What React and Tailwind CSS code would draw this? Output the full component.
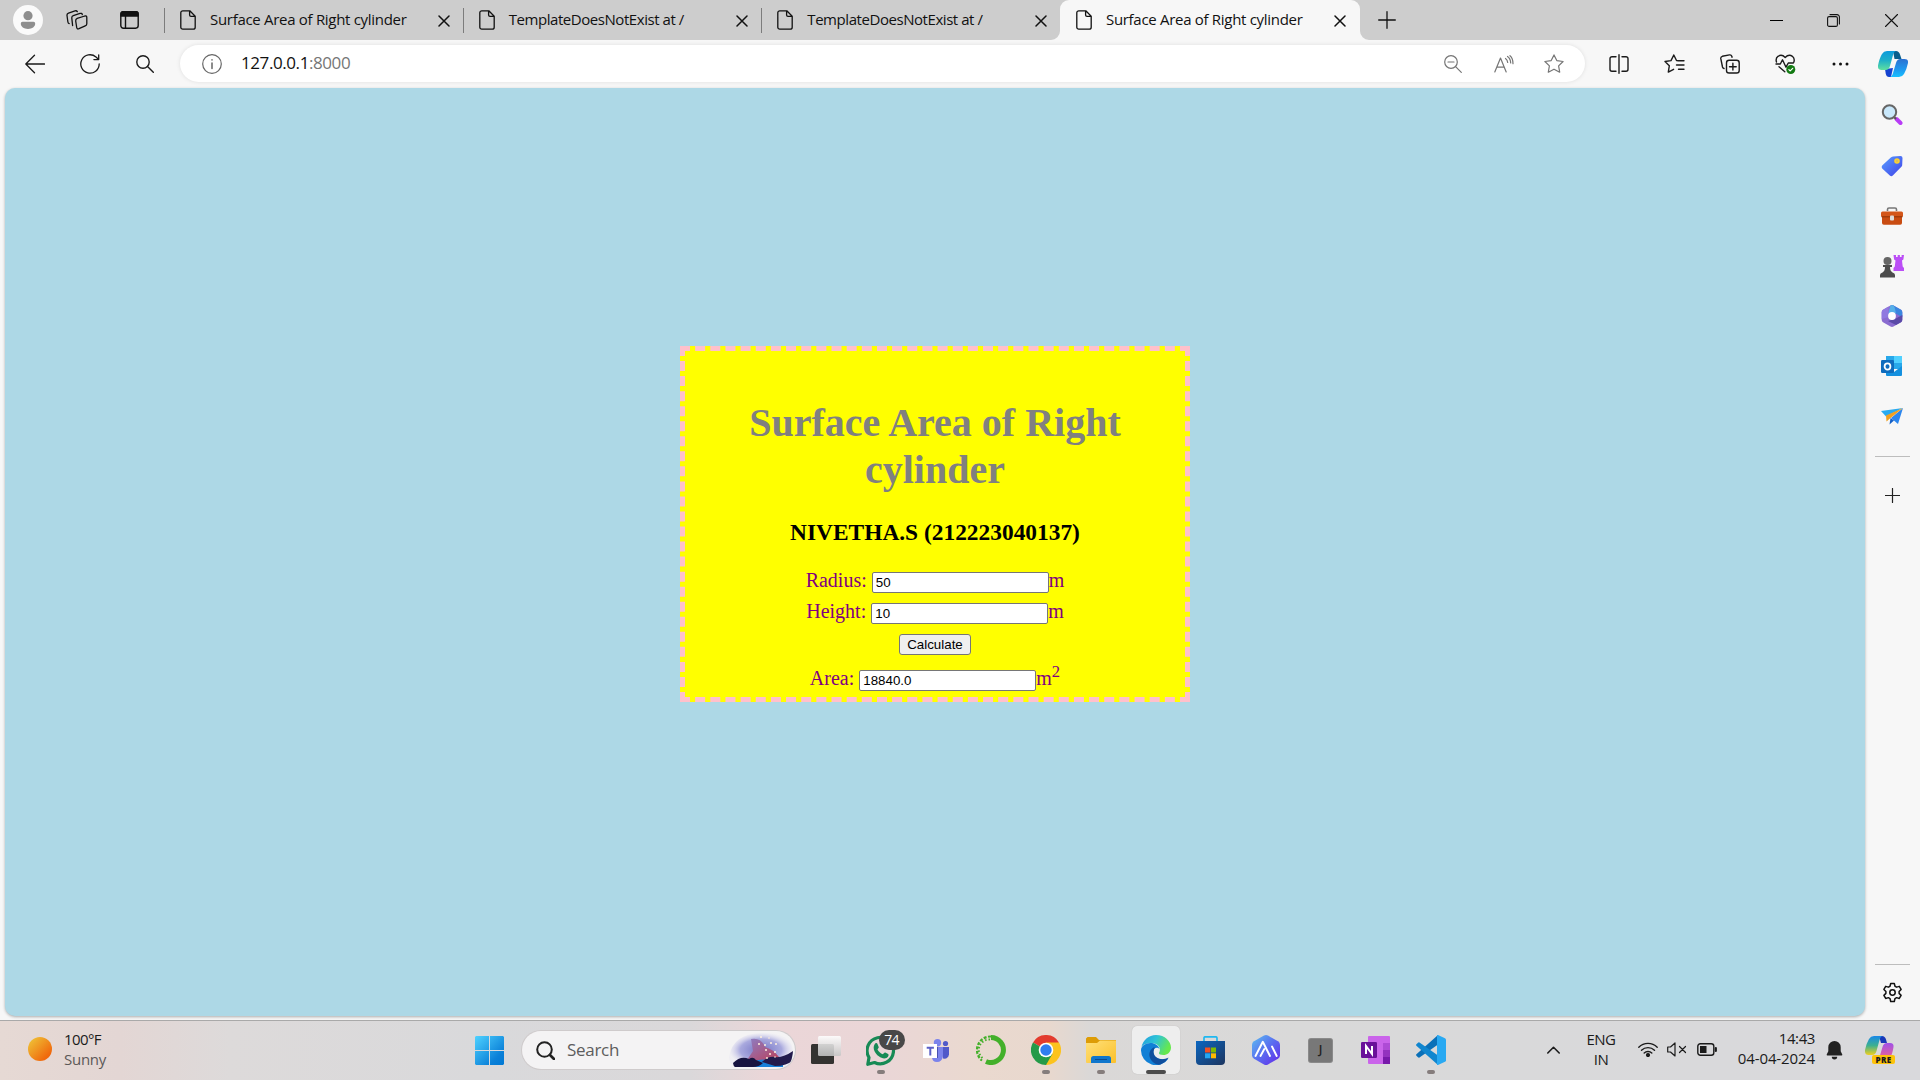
import React from 'react';

const line = { fill: 'none', stroke: 'currentColor', strokeLinecap: 'round', strokeLinejoin: 'round' };

function Svg({ w, h = w, vb, className = '', children, ...rest }) {
  return (
    <svg width={w} height={h} viewBox={vb || `0 0 ${w} ${h}`} className={'block shrink-0 ' + className} {...rest}>
      {children}
    </svg>
  );
}

/* ---------- Tab strip ---------- */

const PageIcon = () => (
  <Svg w={16} h={20} {...line} strokeWidth="1.3">
    <path d="M2.8.8h7l5.400 5.400v11a2 2 0 0 1-2 2H2.800a2 2 0 0 1-2-2V2.800a2 2 0 0 1 2-2zM9.600 1v4a1.400 1.400 0 0 0 1.400 1.400h4" />
  </Svg>
);

const TabClose = () => (
  <Svg w={12} {...line} strokeWidth="1.500">
    <path d="M1 1l10 10M11 1L1 11" />
  </Svg>
);

function Tab({ title, active, narrow }) {
  return (
    <div className={'relative flex h-10 shrink-0 items-center pl-[16px] ' + (active ? 'w-[300px] rounded-t-[9px] bg-[#f7f7f7]' : 'w-[298.66px]')}>
      {!active && <span className="absolute left-0 top-2 h-[25px] w-px bg-[#7c7c7c]" />}
      {active && (
        <>
          <Svg w={9} className="absolute bottom-0 -left-[9px]"><path d="M9 0v9H0A9 9 0 0 0 9 0z" fill="#f7f7f7" /></Svg>
          <Svg w={9} className="absolute bottom-0 -right-[9px]"><path d="M0 0v9h9A9 9 0 0 1 0 0z" fill="#f7f7f7" /></Svg>
        </>
      )}
      <PageIcon />
      <span className={'-mt-0.5 ml-[14px] flex-1 whitespace-nowrap text-[15px] leading-5 text-[#111] ' + (narrow ? 'tracking-[-0.44px]' : 'tracking-[-0.3px]')}>{title}</span>
      <span className={'mt-px ' + (active ? 'mr-[14px]' : 'mr-[13px]')}><TabClose /></span>
    </div>
  );
}

function TabStrip() {
  return (
    <div className="flex h-10 items-center bg-[#cdcdcd] text-[#111]">
      <Svg w={30} className="ml-[13px]">
        <circle cx="15" cy="15" r="15" fill="#fafafa" />
        <circle cx="15" cy="10.700" r="4.600" fill="#8e8e8e" />
        <path d="M9.500 16.800h11a1.700 1.700 0 0 1 1.700 1.700c0 3.200-3 5.400-7.200 5.400s-7.200-2.200-7.200-5.400a1.700 1.700 0 0 1 1.700-1.700z" fill="#8e8e8e" />
      </Svg>
      <Svg w={22} h={20} {...line} strokeWidth="1.300" className="ml-[23px]">
        <path d="M11.200 8.300l7.600-2.300q2-.5 2 1.500v6.200q0 1.600-1.600 2.100l-6.200 2.900q-2 .8-2.300-1.200l-1-6.500q-.2-2 1.500-2.700z" />
        <path d="M16.300 4.600q-.4-1.700-2.300-1.200L7.300 5.600q-1.700.600-1.500 2.500l.8 7.400M11.300 1.600Q10.600.4 9 .9L2.500 3.100Q.8 3.700 1 5.500l.9 6.500q.2 1.300 1.300 1.600" />
      </Svg>
      <Svg w={19} h={18} {...line} strokeWidth="1.400" className="ml-[32px]">
        <rect x=".8" y=".8" width="17.400" height="16.400" rx="2.600" />
        <path d="M1 2.500a1.700 1.700 0 0 1 1.700-1.700h13.600A1.700 1.700 0 0 1 18 2.500V5H1z" fill="currentColor" />
        <path d="M5.500 5v12" />
      </Svg>
      <div className="ml-[25px] flex">
        <Tab title="Surface Area of Right cylinder" />
        <Tab title="TemplateDoesNotExist at /" narrow />
        <Tab title="TemplateDoesNotExist at /" narrow />
        <Tab title="Surface Area of Right cylinder" active />
      </div>
      <Svg w={18} {...line} strokeWidth="1.300" className="ml-[18px]"><path d="M9 .7v16.600M.7 9h16.600" /></Svg>
      <div className="ml-auto flex items-center pr-[22px]">
        <Svg w={13} stroke="#000" strokeWidth="1"><path d="M0 6.500h13" /></Svg>
        <Svg w={13} className="ml-[44px]" {...line} strokeWidth="1.100">
          <rect x=".6" y="2.600" width="9.800" height="9.800" rx="1.500" />
          <path d="M3 .6h7a2.400 2.400 0 0 1 2.400 2.400v7" />
        </Svg>
        <Svg w={13} className="ml-[45px]" {...line} strokeWidth="1.100"><path d="M.5.5l12 12M12.500.5l-12 12" /></Svg>
      </div>
    </div>
  );
}

/* ---------- Toolbar ---------- */

const CopilotIcon = () => (
  <Svg w={30} h={26}>
    <defs>
      <linearGradient id="cpA" x1="0" y1="0" x2="0" y2="1"><stop offset="0" stopColor="#0c9bdc" /><stop offset=".5" stopColor="#1fb0c8" /><stop offset="1" stopColor="#5fe0a0" /></linearGradient>
      <linearGradient id="cpB" x1="0" y1="0" x2="0" y2="1"><stop offset="0" stopColor="#2b70d0" /><stop offset=".6" stopColor="#1e9af0" /><stop offset="1" stopColor="#18c0ff" /></linearGradient>
    </defs>
    <path d="M15 0h3q3 0 4 3.500L23.500 8h-7z" fill="#0a5f8c" />
    <path d="M7 18l8-1-2 9h-2q-2.500 0-3.200-3z" fill="#1542d0" />
    <path d="M9 0h9.500q-2.500 0-3.500 4l-3 11q-1 4-4.500 4H3.500Q-.5 19 0 14.500 1.500 7 4 3 5.800 0 9 0z" fill="url(#cpA)" />
    <path d="M21 26h-9.500q2.500 0 3.500-4l3-10q1-4 4.500-4h4q4 0 3.500 4Q28.500 19 26 23q-1.800 3-5 3z" fill="url(#cpB)" />
  </Svg>
);

function Toolbar() {
  return (
    <div className="flex h-12 items-center bg-[#f7f7f7] text-[#1a1a1a]">
      <Svg w={20} {...line} strokeWidth="1.300" className="-mt-px ml-[25px]"><path d="M19.500 10H.8M9.500 1.300L.8 10l8.700 8.700" /></Svg>
      <Svg w={20} {...line} strokeWidth="1.300" className="ml-[35px]"><path d="M19.200 10A9.200 9.200 0 1 1 16 3l2.400 2.300M18.700.8v4.800h-4.800" /></Svg>
      <Svg w={18} {...line} strokeWidth="1.400" className="-mt-px ml-[36px]"><circle cx="7" cy="7" r="6.200" /><path d="M11.500 11.500l5.800 5.800" /></Svg>
      <div className="-mt-px ml-[26px] flex h-[37px] w-[1405px] items-center rounded-full bg-white shadow-[0_0_4px_rgba(0,0,0,0.1)]">
        <Svg w={20} {...line} strokeWidth="1.200" className="ml-[22px] text-[#666]"><circle cx="10" cy="10" r="9.300" /><path d="M10 9v5.500M10 5.800v.2" strokeWidth="1.500" /></Svg>
        <span className="-mt-px ml-[19px] text-[17px] leading-6 tracking-[-0.42px] text-[#111]">127.0.0.1<span className="text-[#767676]">:8000</span></span>
        <div className="ml-auto flex items-center pr-[21px] text-[#757575]">
          <Svg w={18} {...line} strokeWidth="1.200"><circle cx="7" cy="7" r="6.300" /><path d="M11.600 11.600l5.700 5.700M4 7h6" /></Svg>
          <Svg w={20} h={18} {...line} strokeWidth="1.200" className="ml-[32px]"><path d="M.8 17L6.500 3l5.700 14M2.800 12.200h7.400M11.500 3.500q2 1.500 2.200 4M13.500 1.500q3 2 3.200 6.500M16 .7q3 2.500 3 8" /></Svg>
          <Svg w={20} {...line} strokeWidth="1.200" className="ml-[30px]"><path d="M10 .9l2.800 5.700 6.300.9-4.500 4.400 1.100 6.300-5.700-3-5.700 3 1.100-6.300L.9 7.500l6.300-.9z" /></Svg>
        </div>
      </div>
      <Svg w={20} {...line} strokeWidth="1.400" className="ml-[24px]"><path d="M10 .8v18.400M7 2.700H3a2 2 0 0 0-2 2v10.600a2 2 0 0 0 2 2h4M13 2.700h4a2 2 0 0 1 2 2v10.600a2 2 0 0 1-2 2h-4" /></Svg>
      <Svg w={21} h={20} {...line} strokeWidth="1.400" className="ml-[35px]"><path d="M14.500 6.700l-2-.2L9.800 1 7 6.600l-6 .9 4.300 4.300-1 6.300 5.300-2.800M13.500 6.700h6.500M12.500 11h7.500M14.500 15.200h5.500" /></Svg>
      <Svg w={20} {...line} strokeWidth="1.400" className="ml-[35px]"><rect x="6.500" y="6.300" width="12.700" height="12.700" rx="2.600" /><path d="M12.900 9.300v6.700M9.500 12.700h6.700M4 14.500q-1.200-.3-1.500-1.500L.8 4.700Q.5 2.800 2.300 2.300L9.500.9q1.700-.3 2.300 1.300l.3 1" /></Svg>
      <Svg w={21} h={20} {...line} strokeWidth="1.400" className="ml-[35px]">
        <path d="M1.500 8q-1.200-3.600 1.500-5.700 3.800-2.500 7.200 1.200 3.500-3.700 7.200-1.200Q20 4.400 18.900 8M1 10h4.300l2.200-4.200 3.500 7.400 2.300-4.200h5M4 12.700l5.800 5" />
        <circle cx="15.800" cy="15.500" r="4.500" fill="#137a13" stroke="none" /><path d="M13.900 15.600l1.300 1.300 2.500-2.600" stroke="#fff" strokeWidth="1.200" />
      </Svg>
      <Svg w={17} h={4} className="-mt-px ml-[36px]"><g fill="#111"><circle cx="2" cy="2" r="1.500" /><circle cx="8.500" cy="2" r="1.500" /><circle cx="15" cy="2" r="1.500" /></g></Svg>
      <div className="ml-auto pr-[12px]"><CopilotIcon /></div>
    </div>
  );
}

/* ---------- Web page ---------- */

const field = 'h-[21px] w-[177px] rounded-[2px] border border-[#767676] bg-white px-[3px] font-[Liberation_Sans] text-[13.333px] leading-[17px] text-black outline-none';

function CylinderPage() {
  return (
    <div className="flex h-[928px] w-[1860px] justify-center rounded-[10px] bg-[#add8e6] pt-[258px] shadow-[0_1px_3px_rgba(0,0,0,0.3)]">
      <div className="h-[356px] w-[510px] border-[5px] border-dashed border-[#ffc0cb] bg-[#ffff00] text-center font-[Liberation_Serif] text-[20px] text-[#800080]">
        <h1 className="mt-[48px] text-[40px] font-bold leading-[47px] text-[#808080]">Surface Area of Right<br />cylinder</h1>
        <h3 className="mt-[26px] text-[23.400px] font-bold leading-[27px] text-black">NIVETHA.S (212223040137)</h3>
        <form className="mt-[26px]">
          <div className="flex h-[31px] items-start justify-center leading-[23px]">
            <span className="-mt-[3px]">Radius:&nbsp;</span><input className={field} defaultValue="50" /><span className="-mt-[3px]">m</span>
          </div>
          <div className="flex h-[31px] items-start justify-center leading-[23px]">
            <span className="-mt-[3px]">Height:&nbsp;</span><input className={field} defaultValue="10" /><span className="-mt-[3px]">m</span>
          </div>
          <div className="flex h-[36px] items-start justify-center">
            <button type="button" className="h-[21px] w-[72px] rounded-[3px] border border-[#767676] bg-[#efefef] font-[Liberation_Sans] text-[13.333px] leading-[19px] text-black">Calculate</button>
          </div>
          <div className="flex items-start justify-center leading-[23px]">
            <span className="-mt-[3px]">Area:&nbsp;</span><input className={field} defaultValue="18840.0" />
            <span className="-mt-[3px]">m</span><span className="-mt-[10px] text-[16.667px]">2</span>
          </div>
        </form>
      </div>
    </div>
  );
}

/* ---------- Sidebar ---------- */

function Sidebar() {
  return (
    <div className="flex h-[932px] w-[54px] flex-col items-center pt-px">
      <div className="flex h-[51px] items-center">
        <Svg w={22}><path d="M15.500 15l4 4" stroke="#b83cf6" strokeWidth="4" strokeLinecap="round" /><path d="M12.500 12.500l2.500 2.500" stroke="#555" strokeWidth="2" /><circle cx="8.500" cy="8" r="6.700" fill="#c9e8fb" stroke="#666" strokeWidth="2" /></Svg>
      </div>
      <div className="flex h-[51px] items-center">
        <Svg w={22}><defs><linearGradient id="tg" x1="0" y1="0" x2="1" y2="1"><stop stopColor="#58a0ff" /><stop offset="1" stopColor="#4040e8" /></linearGradient></defs><path d="M12 1.500l7.500-.5q2 0 2 2l-.3 7q0 1-.8 1.800l-8.600 8.800q-1.500 1.200-3 0L1.200 13.400q-1.200-1.500 0-3L9.500 2.700q1-1 2.500-1.200z" fill="url(#tg)" /><circle cx="16" cy="6" r="2" fill="#d9c060" stroke="#ffd12e" strokeWidth="1.600" /></Svg>
      </div>
      <div className="flex h-[50px] items-center">
        <Svg w={24} h={18}><path d="M7.500 4V2.500Q7.500 1 9 1h6q1.500 0 1.500 1.500V4" fill="none" stroke="#777" strokeWidth="1.600" /><path d="M2 9h20v7q0 1.800-1.800 1.800H3.800Q2 17.800 2 16z" fill="#c94c12" /><rect x="1" y="4.500" width="22" height="5.500" rx="1.500" fill="#d4561a" /><path d="M1.500 9.800h21" stroke="#8e3208" /><rect x="10" y="8.500" width="4" height="5" rx="1" fill="#ddd" /></Svg>
      </div>
      <div className="flex h-[50px] items-center">
        <Svg w={24}><path d="M13.500 1H16v2h1.700V1h2.200v2h1.700V1H24l-.6 4.500-1.400 1 .7 6 1.300 1.500V17H13.500v-3l1.300-1.500.7-6-1.400-1z" fill="#bb4ff6" /><circle cx="7.500" cy="7" r="4" fill="#666" /><path d="M3 11h9v2h-2q0 4 2.500 5.500 2.500.8 2.500 2.500v2.500H0V21q0-1.700 2.500-2.500Q5 17 5 13H3z" fill="#4c4c4c" /></Svg>
      </div>
      <div className="flex h-[50px] items-center">
        <Svg w={22}>
          <path d="M9.500.4q1.500-.7 3 0L20 4.800q1.300.8 1.300 2.400v7.600q0 1.600-1.300 2.400l-7.500 4.400q-1.500.7-3 0L2 17.200q-1.300-.8-1.300-2.400V7.200Q.7 5.600 2 4.800z" fill="#8a6cd0" />
          <path d="M9.500.4q1.500-.7 3 0L20 4.800q1.300.8 1.300 2.400v5L14 8z" fill="#3a86e0" /><path d="M9.500.4q3-1 4 1.600L15 8 7 9z" fill="#57b0e8" />
          <path d="M21.300 10v4.800q0 1.600-1.300 2.400l-5 2.900-8-4.100 7-2z" fill="#5b4aa8" />
          <path d="M.7 14V7.200Q.7 5.600 2 4.800L7.500 1.600 7.500 12z" fill="#9079e0" />
          <circle cx="11" cy="11" r="3.900" fill="#fff" />
        </Svg>
      </div>
      <div className="flex h-[50px] items-center">
        <Svg w={22}><rect x="5" y="1" width="16" height="13" fill="#28a8ea" /><path d="M13 1h8v7h-8z" fill="#50d0ff" /><path d="M5 12l8 5 8-6v9q0 1-1 1H6q-1 0-1-1z" fill="#1490df" /><rect x="0" y="5" width="13" height="13" rx="1.200" fill="#0f6cbd" /><ellipse cx="6.500" cy="11.500" rx="2.900" ry="3.200" fill="none" stroke="#fff" strokeWidth="1.800" /></Svg>
      </div>
      <div className="flex h-[50px] items-center">
        <Svg w={22} h={18}><path d="M0 4L22 1 5 9.500z" fill="#28aaf0" /><path d="M22 1l-5 16-7-6z" fill="#2b86ee" /><path d="M22 1L5 8.500l.500 6L9.500 11z" fill="#f0a020" /><path d="M9.500 11L8.500 17.500l4.500-4z" fill="#1460c8" /></Svg>
      </div>
      <div className="mt-[15px] h-px w-[35px] bg-[#bdbdbd]" />
      <Svg w={15} {...line} strokeWidth="1.200" className="mt-[31px] text-[#222]"><path d="M7.500.5v14M.5 7.500h14" /></Svg>
      <div className="mt-auto h-px w-[35px] bg-[#bdbdbd]" />
      <Svg w={21} {...line} strokeWidth="1.500" className="mb-[17px] mt-[17px] text-[#111]">
        <path d="M8.700.8h3.600l.7 2.700 1.600.9 2.700-.8 1.800 3.100-2 2v1.900l2 2-1.800 3.100-2.700-.8-1.600.9-.7 2.900H8.700L8 15.800l-1.600-.9-2.700.8-1.800-3.100 2-2V8.700l-2-2 1.800-3.100 2.700.8L8 3.500z" transform="translate(0 .75)" /><circle cx="10.500" cy="10.500" r="2.700" />
      </Svg>
    </div>
  );
}

/* ---------- Taskbar ---------- */

function App55({ children, dot, active }) {
  return (
    <div className="relative flex h-[59px] w-[55px] shrink-0 items-center justify-center">
      {active && <span className="absolute left-[4px] top-[5px] h-12 w-12 rounded-[5px] bg-[#eeeeee] shadow-[0_0_1px_rgba(0,0,0,0.2)]" />}
      <span className="relative -mt-px">{children}</span>
      {dot && <span className="absolute bottom-[6px] h-1 w-2 rounded-full bg-[#857d7c]" />}
      {active && <span className="absolute bottom-[6px] h-1 w-5 rounded-full bg-[#4c4c4c]" />}
    </div>
  );
}

const StartIcon = () => (
  <Svg w={29} className="ml-[3px]">
    <defs><linearGradient id="win" gradientUnits="userSpaceOnUse" x1="0" y1="0" x2="29" y2="29"><stop stopColor="#4fd2ff" /><stop offset=".75" stopColor="#0a80d8" /><stop offset="1" stopColor="#0078d4" /></linearGradient></defs>
    <path d="M1 0h13v14H0V1zM15 0h13l1 1v13H15zM0 15h14v14H1l-1-1zM15 15h14v13l-1 1H15z" fill="url(#win)" />
  </Svg>
);

const SearchArt = () => (
  <Svg w={64} h={34}>
    <defs>
      <radialGradient id="sky"><stop offset=".2" stopColor="#8484cc" /><stop offset=".65" stopColor="#a9a9de" /><stop offset="1" stopColor="#dddbf0" stopOpacity=".2" /></radialGradient>
      <linearGradient id="hill" x1="0" y1="0" x2="1" y2="1"><stop stopColor="#8a80c8" /><stop offset="1" stopColor="#c03a50" /></linearGradient>
      <clipPath id="oval"><path d="M0 24Q4 0 33 0t31 17q0 9-5 17H6Q0 30 0 24z" /></clipPath>
    </defs>
    <g clipPath="url(#oval)">
      <rect width="64" height="34" fill="url(#sky)" />
      <path d="M22 6q10-2 14 8 8 2 14 10l3 6H16l8-12z" fill="url(#hill)" />
      <path d="M14 34q16-11 28-6l12-3v9z" fill="#1680d8" />
      <path d="M4 30q8-8 16-4 4-3 7 1l7 3q-4 4-10 4H5z" fill="#171440" />
      <path d="M33 29q6-6 13-5 8 1 18-6v9q-6 6-18 6z" fill="#221b4c" />
      <g fill="#fff0dc"><circle cx="32" cy="4" r="1" /><circle cx="30" cy="11" r="1" /><circle cx="36" cy="12" r="1" /><circle cx="42" cy="10" r="1" /><circle cx="37" cy="17" r="1" /><circle cx="41" cy="21" r="1" /><circle cx="47" cy="11" r="1" /><circle cx="46" cy="19" r="1" /><circle cx="40" cy="5" r=".8" /><circle cx="38" cy="25" r=".9" /><circle cx="46" cy="24" r=".8" /></g>
    </g>
  </Svg>
);

const TaskViewIcon = () => (
  <Svg w={30} h={28}>
    <defs><linearGradient id="tvw" x1="0" y1="0" x2="0" y2="1"><stop stopColor="#fff" /><stop offset="1" stopColor="#c4c4c4" /></linearGradient></defs>
    <rect y="8" width="23" height="20" rx="1.500" fill="#343331" /><rect x="7" width="23" height="20" rx="1.500" fill="url(#tvw)" fillOpacity=".88" />
  </Svg>
);

const WhatsAppIcon = () => (
  <Svg w={30} h={31}>
    <path d="M3 22.500A13.200 13.200 0 1 1 8.500 27.500L1.800 29.300z" fill="none" stroke="#178a55" strokeWidth="3.200" strokeLinejoin="round" />
    <path d="M8.500 9.500c1-1.800 2.500-1.800 3-.4l1.200 2.800c.3 1-1 1.800-1.200 2.500 1 2 3 3.800 5.300 4.800.8-.2 1.500-2 2.500-1.600l2.800 1.400c1 .6.600 3-1.600 4-4 1.700-9.500-2-11.700-6.200-1.500-2.600-1.400-5.500-.3-7.300z" fill="#178a55" />
  </Svg>
);

const TeamsIcon = () => (
  <Svg w={26} h={23}>
    <circle cx="14.500" cy="3.700" r="3.700" fill="#7b83eb" /><circle cx="22.500" cy="4.500" r="2.600" fill="#5059c9" />
    <path d="M18 8h8v7.500q-1 5-6 4z" fill="#5059c9" /><path d="M9 8h11v9q-1 6-6 6t-5-5z" fill="#7b83eb" /><path d="M9 8h6v11h-5z" fill="#4a51b0" />
    <rect y="5" width="14" height="14" fill="#fff" /><path d="M3.700 8.700h7.200M7.300 9v7.500" stroke="#5b5fc7" strokeWidth="2" />
  </Svg>
);

const AnacondaIcon = () => (
  <Svg w={30} fill="none" stroke="#43b02a">
    <path d="M15 2.500A12.500 12.500 0 1 1 10 26.500" strokeWidth="5" />
    <path d="M15 1.500A13.500 13.500 0 0 0 6 25.500" strokeWidth="2.200" strokeDasharray="3 1.500" />
    <path d="M14 4.500A10.500 10.500 0 0 0 6.500 23" strokeWidth="2" strokeDasharray="1.500 2" />
  </Svg>
);

const ChromeIcon = () => (
  <Svg w={30}>
    <path d="M15 15L2 7.500A15 15 0 0 1 28 7.500z" fill="#e33b2e" /><path d="M15 15L28 7.500A15 15 0 0 1 15 30z" fill="#fcc31e" /><path d="M15 15v0L2 7.500A15 15 0 0 0 15 30l6.500-11.200z" fill="#249a48" />
    <path d="M15 7.500h13L21 19z" fill="#fcc31e" /><circle cx="15" cy="15" r="7.300" fill="#fff" /><circle cx="15" cy="15" r="5.700" fill="#2f7df0" />
  </Svg>
);

const FolderIcon = () => (
  <Svg w={30} h={26}>
    <defs><linearGradient id="fo" x1="0" y1="0" x2="1" y2="1"><stop stopColor="#ffe07a" /><stop offset="1" stopColor="#fbc02a" /></linearGradient></defs>
    <path d="M1.500 0H10l3 3h17v5H0V1.500z" fill="#dd9c06" /><path d="M0 6h11l3-2.500h16V25q0 1-1 1H1q-1 0-1-1z" fill="url(#fo)" />
    <path d="M5 26v-4.500q0-2.500 2.500-2.500h15q2.500 0 2.500 2.500V26z" fill="#0f76cc" /><path d="M9 22.500h12" stroke="#0a4c92" />
  </Svg>
);

const EdgeIcon = () => (
  <Svg w={30}>
    <defs>
      <linearGradient id="eg1" x1="0" y1="0" x2="1" y2=".4"><stop stopColor="#2099e0" /><stop offset=".5" stopColor="#2fc4d6" /><stop offset="1" stopColor="#66e84e" /></linearGradient>
    </defs>
    <path d="M.4 12.500A15 15 0 0 1 15 0c9 0 15 6.500 15 12.500 0 5-4 7.500-7.500 7.500-3 0-5-1-4.500-2.300 2-2.500 1-8.200-5-9.200C6 7.600 1.500 9.500.4 12.500z" fill="url(#eg1)" />
    <path d="M0 15c0-4 4.500-7 9.500-7 4.500 0 8 2.500 9 6-2-2.500-6-1.500-6.300 2.500-.3 5.500 5.800 9.500 15.300 7A15 15 0 0 1 0 15z" fill="#1180d6" />
    <path d="M12.500 12.500c-3 1.500-5.500 6-3.500 10.500 2 4.500 6 6.700 9 6.700 4-.5 7.500-3.700 9.500-7.200-6 3.500-13.500 1.500-14.800-4.500-.3-2 .3-4.500 1.300-5.500z" fill="#104f9e" />
  </Svg>
);

const StoreIcon = () => (
  <Svg w={29} h={29}>
    <defs><linearGradient id="st" x1="0" y1="0" x2="1" y2="1"><stop stopColor="#0b66c0" /><stop offset="1" stopColor="#1d355f" /></linearGradient></defs>
    <path d="M8 6V2q0-1.200 1.200-1.200h10.600Q21 .8 21 2v4" fill="none" stroke="#20b8f0" strokeWidth="1.700" />
    <path d="M0 5h29v20q0 4-4 4H4q-4 0-4-4z" fill="url(#st)" />
    <path d="M9 11.500h5.300v5H9z" fill="#f25022" /><path d="M15 11.500h5v5h-5z" fill="#7fba00" /><path d="M9 17.300h5.300v5H9z" fill="#22a6f2" /><path d="M15 17.300h5v5h-5z" fill="#ffb900" />
  </Svg>
);

const HexIcon = () => (
  <Svg w={28} h={30}>
    <defs><linearGradient id="hx" x1="0" y1="0" x2="1" y2="1"><stop stopColor="#5cc0f0" /><stop offset=".5" stopColor="#5a6cf0" /><stop offset="1" stopColor="#6428e8" /></linearGradient></defs>
    <path d="M12 .6q2-1 4 0l10 5.700q2 1.200 2 3.400v10.600q0 2.200-2 3.400l-10 5.700q-2 1-4 0L2 23.700q-2-1.200-2-3.400V9.700q0-2.200 2-3.400z" fill="url(#hx)" />
    <path d="M3.500 21L10.800 6.800 18 21M8.500 21l3.800-7M20 11.500l4.700 9.500" fill="none" stroke="#fff" strokeWidth="1.900" strokeLinecap="round" strokeLinejoin="round" />
  </Svg>
);

const OneNoteIcon = () => (
  <Svg w={29} h={28}>
    <path d="M8 0h20q1 0 1 1v26q0 1-1 1H8q-1 0-1-1V1q0-1 1-1z" fill="#ca64ea" /><path d="M22 7h7v7h-7z" fill="#ae4bd5" /><path d="M22 14h7v7h-7z" fill="#9332bf" /><path d="M22 21h7v7h-7z" fill="#7719aa" />
    <rect y="6" width="16" height="16" rx="1.200" fill="#6a1099" /><path d="M5 18v-8l6 8v-8" fill="none" stroke="#fff" strokeWidth="2" />
  </Svg>
);

const VSCodeIcon = () => (
  <Svg w={30}>
    <path d="M22 0v9.500L3.500 22.500q-.8.500-1.500-.2L.4 20.700q-.6-.7 0-1.400z" fill="#0a70b8" /><path d="M22 30v-9.500L3.500 7.500Q2.700 7 2 7.700L.4 9.200q-.6.700 0 1.500z" fill="#1086cf" />
    <path d="M22 0l7 3.200q1 .5 1 1.500v20.600q0 1-1 1.500L22 30q-1 .3-1-.8V.8Q21-.3 22 0z" fill="#29a9f2" />
  </Svg>
);

function Taskbar() {
  return (
    <div className="flex h-[60px] items-center border-t border-[#a9a9a9] bg-[linear-gradient(90deg,#e6d9d4_0px,#e3d6d4_120px,#dddada_230px,#d9d9db_480px,#dad8da_690px,#ebd6d8_770px,#ead6d7_880px,#ead9cf_980px,#e8d8ce_1050px,#dad8d7_1090px,#d9d9d9_1300px,#d9d9dc_1920px)]">
      <Svg w={24} className="-mt-1 ml-[28px]"><defs><linearGradient id="sun" x1="0" y1="0" x2="1" y2="1"><stop offset=".1" stopColor="#efbf35" /><stop offset=".8" stopColor="#f0690d" /></linearGradient></defs><circle cx="12" cy="12" r="12" fill="url(#sun)" /></Svg>
      <div className="-mt-1 ml-[12px] w-[398px] text-[15px] leading-5 tracking-[-0.6px]">
        <div className="text-[#1b1b1b]">100°F</div>
        <div className="tracking-[-0.25px] text-[#5c5958]">Sunny</div>
      </div>
      <div className="ml-[10px]"><StartIcon /></div>
      <div className="-mt-px ml-[18px] flex h-[38px] w-[273px] items-center rounded-full bg-[#f4f3f4] pl-[14px] pr-[2px] shadow-[0_0_0_1px_#cfcbcc]">
        <Svg w={19} {...line} strokeWidth="2" className="text-[#222]"><circle cx="8.500" cy="8.500" r="7.300" /><path d="M14 14l4 4" strokeWidth="2.600" /></Svg>
        <span className="ml-[12px] flex-1 text-[17px] leading-6 tracking-[-0.3px] text-[#5d5d5d]">Search</span>
        <SearchArt />
      </div>
      <div className="ml-[3px] flex">
        <App55><TaskViewIcon /></App55>
        <App55 dot>
          <WhatsAppIcon />
          <span className="absolute -top-[5px] left-[13px] h-5 w-[26px] rounded-full bg-[#484848] text-center text-[14px] leading-5 tracking-[-0.7px] text-white">74</span>
        </App55>
        <App55><TeamsIcon /></App55>
        <App55><AnacondaIcon /></App55>
        <App55 dot><ChromeIcon /></App55>
        <App55 dot><FolderIcon /></App55>
        <App55 active><EdgeIcon /></App55>
        <App55><StoreIcon /></App55>
        <App55><HexIcon /></App55>
        <App55><span className="block h-[23px] w-[23px] rounded-[2px] bg-[#787878] text-center text-[12px] font-semibold leading-[22px] text-[#222] shadow-[0_0_0_1px_#8a8a8a]">J</span></App55>
        <App55><OneNoteIcon /></App55>
        <App55 dot><VSCodeIcon /></App55>
      </div>
      <div className="-mt-0.5 ml-auto flex items-center text-[15px] leading-5 tracking-[-0.5px] text-[#1b1b1b]">
        <Svg w={13} h={8} {...line} strokeWidth="1.600"><path d="M.8 7l5.700-5.700L12.200 7" /></Svg>
        <div className="-mt-0.5 ml-[21px] w-[40px] text-center">ENG<br />IN</div>
        <Svg w={20} h={15} {...line} strokeWidth="1.400" className="ml-[17px]"><path d="M.8 5.200a13 13 0 0 1 18.400 0M3.500 8.300a9.200 9.200 0 0 1 13 0M6.200 11a5.400 5.400 0 0 1 7.600 0" /><circle cx="10" cy="13" r="1.400" fill="currentColor" /></Svg>
        <Svg w={20} h={15} {...line} strokeWidth="1.200" className="ml-[9px]"><path d="M.7 5h2.800L8 1v13l-4.500-4H.7zM12.500 4.500l6 6M18.500 4.500l-6 6" /></Svg>
        <Svg w={21} h={13} {...line} strokeWidth="1.400" className="ml-[10px]"><rect x=".8" y=".8" width="16" height="11.400" rx="2.500" /><rect x="3" y="3" width="6.500" height="7" fill="currentColor" stroke="none" /><path d="M18.800 5v3" strokeWidth="2.200" /></Svg>
        <div className="-mt-1 ml-[17px] w-[80px] whitespace-nowrap text-right tracking-[-0.1px]"><span className="tracking-[-0.4px]">14:43</span><br />04-04-2024</div>
        <Svg w={17} h={20} className="ml-[11px]" fill="#222"><path d="M8.500 1a6.200 6.200 0 0 1 6.200 6.200v4l1.600 3.300q.2.900-.7.900H1.400q-.9 0-.7-.9l1.600-3.300v-4A6.200 6.200 0 0 1 8.500 1zM5.800 16.800h5.400a2.700 2.700 0 0 1-5.400 0z" /></Svg>
        <div className="relative ml-[22px] mr-[25px] mt-0.5 h-[30px] w-[30px]">
          <Svg w={30} h={25}>
            <defs>
              <linearGradient id="pA" x1="0" y1="0" x2="0" y2="1"><stop stopColor="#1888e8" /><stop offset=".5" stopColor="#3cb090" /><stop offset="1" stopColor="#f0d020" /></linearGradient>
              <linearGradient id="pB" x1="0" y1="0" x2="0" y2="1"><stop stopColor="#a050e8" /><stop offset="1" stopColor="#f86888" /></linearGradient>
            </defs>
            <path d="M14 0h3q3 0 4 3.500L22 7h-6z" fill="#1838b8" />
            <path d="M9 0h9q-2.500 0-3.500 4l-3 11q-1 4-4.500 4H3.500Q-.5 19 0 14 1.500 7 4 3 5.800 0 9 0z" fill="url(#pA)" />
            <path d="M20 25h-9q2.500 0 3.500-4l3-10q1-4 4.500-4h3q4 0 3.500 4-1 7-3.500 11-1.800 3-5 3z" fill="url(#pB)" />
          </Svg>
          <span className="absolute bottom-0.5 left-[7px] h-[9px] w-[23px] rounded-[2px] bg-[#fdc30b] text-center text-[8px] font-extrabold leading-[9px] tracking-[0.3px] text-[#1b1b1b]">PRE</span>
        </div>
      </div>
    </div>
  );
}

export default function App() {
  return (
    <div className="h-[1080px] w-[1920px] overflow-hidden bg-[#f7f7f7] font-['Open_Sans',sans-serif]">
      <TabStrip />
      <Toolbar />
      <div className="flex h-[932px] pl-[5px]">
        <CylinderPage />
        <Sidebar />
      </div>
      <Taskbar />
    </div>
  );
}
